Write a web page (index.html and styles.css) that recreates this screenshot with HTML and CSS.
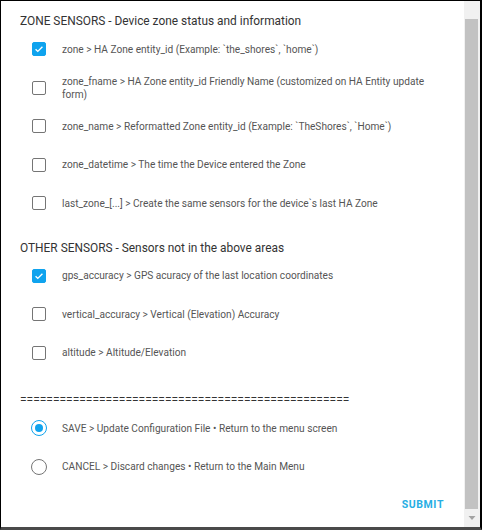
FILE: index.html
```html
<!DOCTYPE html>
<html>
<head>
<meta charset="utf-8">
<link rel="stylesheet" href="styles.css">
</head>
<body>
<div class="frame">
  <div class="content">
    <div class="section-title">ZONE SENSORS - Device zone status and information</div>
    <div class="row"><span class="cb checked"><svg viewBox="0 0 14 14"><path d="M3 7.2l2.6 2.6L11 4.4"/></svg></span><span class="label">zone &gt; HA Zone entity_id (Example: `the_shores`, `home`)</span></div>
    <div class="row"><span class="cb"></span><span class="label">zone_fname &gt; HA Zone entity_id Friendly Name (customized on HA Entity update form)</span></div>
    <div class="row"><span class="cb"></span><span class="label">zone_name &gt; Reformatted Zone entity_id (Example: `TheShores`, `Home`)</span></div>
    <div class="row"><span class="cb"></span><span class="label">zone_datetime &gt; The time the Device entered the Zone</span></div>
    <div class="row"><span class="cb"></span><span class="label">last_zone_[...] &gt; Create the same sensors for the device`s last HA Zone</span></div>
    <div class="section-title second">OTHER SENSORS - Sensors not in the above areas</div>
    <div class="row"><span class="cb checked"><svg viewBox="0 0 14 14"><path d="M3 7.2l2.6 2.6L11 4.4"/></svg></span><span class="label">gps_accuracy &gt; GPS acuracy of the last location coordinates</span></div>
    <div class="row"><span class="cb"></span><span class="label">vertical_accuracy &gt; Vertical (Elevation) Accuracy</span></div>
    <div class="row"><span class="cb"></span><span class="label">altitude &gt; Altitude/Elevation</span></div>
    <div class="divider">==================================================</div>
    <div class="row"><span class="radio checked"></span><span class="label">SAVE &gt; Update Configuration File • Return to the menu screen</span></div>
    <div class="row"><span class="radio"></span><span class="label">CANCEL &gt; Discard changes • Return to the Main Menu</span></div>
    <div class="actions"><button class="submit">Submit</button></div>
  </div>
  <div class="scrollbar">
    <div class="sb-top"></div>
    <div class="sb-thumb"></div>
    <div class="sb-arrow"><svg viewBox="0 0 16 16"><path d="M4.5 6h7L8 10z"/></svg></div>
  </div>
</div>
</body>
</html>
```
FILE: styles.css
```css
html, body {
  margin: 0;
  padding: 0;
  background: #ffffff;
}
.frame {
  width: 482px;
  height: 530px;
  box-sizing: border-box;
  border-top: 1px solid #000;
  border-left: 1px solid #000;
  border-right: 2px solid #000;
  border-bottom: 3px solid #4a4a4a;
  display: flex;
  overflow: hidden;
  font-family: Roboto, "Liberation Sans", sans-serif;
}
.content {
  flex: 1;
  padding: 12px 20px 0 19px;
  display: flex;
  flex-direction: column;
}
.section-title {
  font-size: 11.9px;
  line-height: 17px;
  height: 17px;
  color: #333333;
  white-space: nowrap;
}
.section-title.second {
  margin-top: 17px;
}
.row {
  height: 38.5px;
  display: flex;
  align-items: center;
  padding-left: 12px;
}
.label {
  margin-left: 16px;
  font-size: 10.15px;
  line-height: 13px;
  color: #555555;
}
.cb {
  flex: none;
  width: 14px;
  height: 14px;
  box-sizing: border-box;
  border: 1.5px solid #757575;
  border-radius: 2px;
  display: flex;
  align-items: center;
  justify-content: center;
}
.cb.checked {
  background: #0fa3ee;
  border-color: #0fa3ee;
}
.cb svg {
  width: 14px;
  height: 14px;
  fill: none;
  stroke: #fff;
  stroke-width: 1.6;
}
.radio {
  flex: none;
  width: 16px;
  height: 16px;
  margin-left: -1px;
  margin-right: -1px;
  box-sizing: border-box;
  border: 1.5px solid #757575;
  border-radius: 50%;
  display: flex;
  align-items: center;
  justify-content: center;
}
.radio.checked {
  border-color: #0fa3ee;
}
.radio.checked::after {
  content: "";
  width: 8px;
  height: 8px;
  border-radius: 50%;
  background: #0fa3ee;
}
.divider {
  margin-top: 20px;
  font-size: 12px;
  line-height: 17px;
  height: 17px;
  color: #333333;
  white-space: nowrap;
  overflow: hidden;
}
.actions {
  display: flex;
  justify-content: flex-end;
  margin-top: 9px;
}
.submit {
  border: none;
  background: none;
  padding: 4px 0;
  font-family: Roboto, "Liberation Sans", sans-serif;
  font-weight: 700;
  font-size: 10.5px;
  letter-spacing: 0.6px;
  text-transform: uppercase;
  color: #27aee3;
  line-height: 12px;
}
.scrollbar {
  width: 16px;
  background: #f1f1f1;
  display: flex;
  flex-direction: column;
}
.sb-top {
  height: 18px;
}
.sb-thumb {
  flex: 1;
  margin: 0 2px 0 1px;
  background: #c2c2c2;
}
.sb-arrow {
  height: 18px;
  display: flex;
  align-items: center;
  justify-content: center;
}
.sb-arrow svg {
  width: 16px;
  height: 16px;
  fill: #a3a3a3;
}
```
